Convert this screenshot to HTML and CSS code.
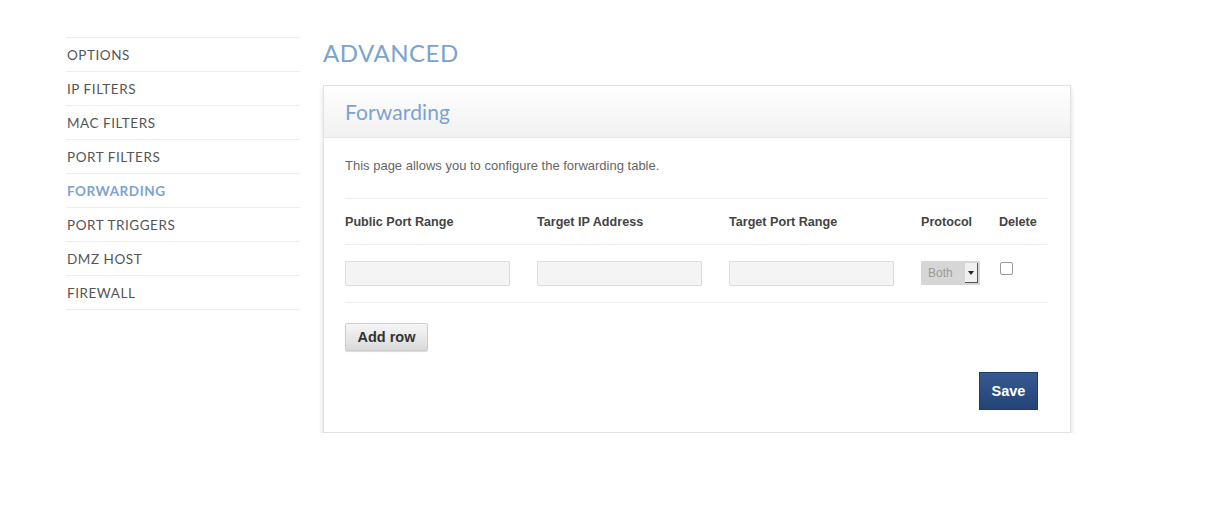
FILE: index.html
```html
<!DOCTYPE html>
<html>
<head>
<meta charset="utf-8">
<link rel="stylesheet" href="styles.css">
</head>
<body>
<div class="page">
  <nav class="side">
    <a class="item">OPTIONS</a>
    <a class="item">IP FILTERS</a>
    <a class="item">MAC FILTERS</a>
    <a class="item">PORT FILTERS</a>
    <a class="item active">FORWARDING</a>
    <a class="item">PORT TRIGGERS</a>
    <a class="item">DMZ HOST</a>
    <a class="item">FIREWALL</a>
  </nav>
  <main class="main">
    <h1 class="title">ADVANCED</h1>
    <section class="card">
      <header class="card-head"><h2>Forwarding</h2></header>
      <div class="card-body">
        <p class="desc">This page allows you to configure the forwarding table.</p>
        <div class="table">
          <div class="row head">
            <div class="c c1">Public Port Range</div>
            <div class="c c2">Target IP Address</div>
            <div class="c c3">Target Port Range</div>
            <div class="c c4">Protocol</div>
            <div class="c c5">Delete</div>
          </div>
          <div class="row body">
            <div class="c c1"><span class="input"></span></div>
            <div class="c c2"><span class="input"></span></div>
            <div class="c c3"><span class="input"></span></div>
            <div class="c c4"><span class="select"><span class="sel-text">Both</span><span class="sel-btn"><span class="arrow"></span></span></span></div>
            <div class="c c5"><span class="check"></span></div>
          </div>
        </div>
        <button class="btn-add">Add row</button>
        <div class="actions"><button class="btn-save">Save</button></div>
      </div>
    </section>
  </main>
</div>
</body>
</html>
```
FILE: styles.css
```css
html, body { margin: 0; padding: 0; background: #fff; }
body { font-family: "Liberation Sans", Arial, sans-serif; }
.page { display: flex; padding: 37px 0 0 66px; gap: 23px; }
.side { width: 234px; display: flex; flex-direction: column; border-top: 1px solid #eee; }
.item { display: block; height: 33px; line-height: 35px; border-bottom: 1px solid #eee; font-family: "Lato", sans-serif; font-size: 13.5px; letter-spacing: 0.55px; color: #555; padding-left: 1px; }
.item.active { color: #7ba3cf; font-weight: bold; }
.main { width: 748px; }
.title { margin: 0; font-family: "Lato", sans-serif; font-weight: normal; font-size: 24px; letter-spacing: 0.5px; color: #7ba3cf; line-height: 32px; margin-top: 0; height: 48px; }
.card { border: 1px solid #e2e2e2; box-shadow: 0 3px 5px rgba(0,0,0,0.15); background: #fff; }
.card-head { height: 51px; background: linear-gradient(#ffffff, #f1f1f1); border-bottom: 1px solid #e6e6e6; display: flex; align-items: center; padding-left: 21px; }
.card-head h2 { margin: 0; font-family: "Lato", sans-serif; font-weight: normal; font-size: 21px; color: #7ba3cf; letter-spacing: 0.1px; }
.card-body { padding: 20px 22px 22px 21px; }
.desc { margin: 0 0 24px; font-size: 13px; color: #666; line-height: 16px; }
.table { border-top: 1px solid #eee; }
.row { display: flex; border-bottom: 1px solid #eee; }
.row.head { height: 45px; align-items: center; font-size: 12.6px; font-weight: bold; color: #444; }
.row.body { height: 57px; align-items: flex-start; padding-top: 0; }
.row.body .c { padding-top: 16px; }
.c1, .c2, .c3 { width: 192px; }
.c4 { width: 78px; }
.c5 { width: 49px; }
.input { display: block; width: 163px; height: 23px; border: 1px solid #ddd; background: #f4f4f4; border-radius: 1px; }
.select { display: flex; width: 59px; height: 24px; background: #d6d6d6; border-radius: 1px; }
.sel-text { flex: 1; font-size: 12px; color: #9a9a9a; line-height: 24px; padding-left: 7px; }
.sel-btn { width: 13px; height: 20px; margin: 2px 2px 0 0; background: #f0f0f0; border-right: 1px solid #555; border-bottom: 1px solid #555; display: flex; align-items: center; justify-content: center; box-sizing: border-box; }
.arrow { width: 0; height: 0; border-left: 3px solid transparent; border-right: 3px solid transparent; border-top: 4px solid #222; }
.check { display: block; width: 11px; height: 11px; border: 1px solid #999; border-radius: 2px; background: #fff; margin-left: 1px; margin-top: 1px; }
.btn-add { margin-top: 20px; display: block; width: 83px; height: 28px; border: 1px solid #ccc; border-radius: 2px; background: linear-gradient(#f6f6f6, #dadada); font-family: "Liberation Sans", Arial, sans-serif; font-weight: bold; font-size: 14.5px; color: #333; padding: 0; box-shadow: 0 1px 1px rgba(0,0,0,0.15); }
.actions { display: flex; justify-content: flex-end; padding-right: 10px; margin-top: 21px; }
.btn-save { width: 59px; height: 38px; border: 1px solid #1d3c6c; background: linear-gradient(#355991, #244478); color: #fff; font-family: "Liberation Sans", Arial, sans-serif; font-weight: bold; font-size: 14.5px; padding: 0; }
```
